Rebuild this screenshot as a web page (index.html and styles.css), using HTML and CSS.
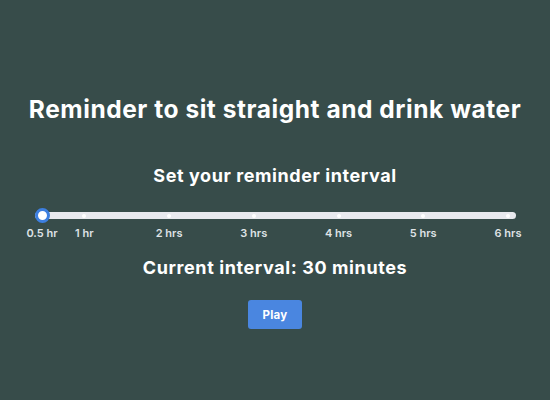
FILE: index.html
```html
<!DOCTYPE html>
<html lang="en">
<head>
<meta charset="utf-8">
<title>Reminder</title>
<link rel="stylesheet" href="styles.css">
</head>
<body>
<main class="app">
  <h1 class="title">Reminder to sit straight and drink water</h1>
  <h2 class="subtitle">Set your reminder interval</h2>
  <div class="slider">
    <div class="track">
      <div class="ticks">
        <span class="tick c1"></span>
        <span class="tick c2"></span>
        <span class="tick c4"></span>
        <span class="tick c6"></span>
        <span class="tick c8"></span>
        <span class="tick c10"></span>
        <span class="tick c12"></span>
      </div>
      <span class="thumb"></span>
    </div>
    <div class="labels">
      <span class="label c1">0.5 hr</span>
      <span class="label c2">1 hr</span>
      <span class="label c4">2 hrs</span>
      <span class="label c6">3 hrs</span>
      <span class="label c8">4 hrs</span>
      <span class="label c10">5 hrs</span>
      <span class="label c12">6 hrs</span>
    </div>
  </div>
  <p class="current">Current interval: 30 minutes</p>
  <button class="play" type="button">Play</button>
</main>
</body>
</html>
```

FILE: styles.css
```css
html, body {
  margin: 0;
  padding: 0;
  height: 100%;
}
body {
  background: #374c4a;
  font-family: Inter, "Noto Sans", "Liberation Sans", sans-serif;
  color: #ffffff;
}
.app {
  display: flex;
  flex-direction: column;
  align-items: center;
  padding-top: 95px;
}
.title {
  margin: 0;
  font-size: 24.5px;
  line-height: 29px;
  font-weight: 700;
  letter-spacing: 0.55px;
  text-align: center;
}
.subtitle {
  margin: 41px 0 0;
  font-size: 18px;
  line-height: 22px;
  font-weight: 700;
  letter-spacing: 0.58px;
}
.slider {
  width: 481px;
  margin-top: 25px;
}
.track {
  position: relative;
  height: 7px;
  border-radius: 4px;
  background: #e8e9ee;
}
.ticks, .labels {
  display: grid;
  grid-template-columns: repeat(12, 1fr);
  margin-left: calc(7.5px - (100% - 15px) / 22);
  margin-right: calc(7.5px - (100% - 15px) / 22);
}
.ticks {
  position: absolute;
  inset: 0;
  align-items: center;
}
.tick {
  justify-self: center;
  width: 4px;
  height: 4px;
  border-radius: 50%;
  background: #ffffff;
}
.thumb {
  position: absolute;
  left: 0;
  top: 50%;
  width: 9px;
  height: 9px;
  margin-top: -7.5px;
  border: 3px solid #3d7fe0;
  border-radius: 50%;
  background: #ffffff;
}
.labels {
  margin-top: 8px;
}
.label {
  justify-self: center;
  white-space: nowrap;
  font-size: 11px;
  line-height: 13px;
  font-weight: 600;
  color: #dfe3e6;
}
.c1 { grid-column: 1; }
.c2 { grid-column: 2; }
.c4 { grid-column: 4; }
.c6 { grid-column: 6; }
.c8 { grid-column: 8; }
.c10 { grid-column: 10; }
.c12 { grid-column: 12; }
.current {
  margin: 17px 0 0;
  font-size: 18px;
  line-height: 22px;
  font-weight: 700;
  letter-spacing: 0.6px;
}
.play {
  margin-top: 21px;
  width: 54px;
  height: 29px;
  border: 0;
  border-radius: 3px;
  background: #4a86e0;
  color: #ffffff;
  font-family: inherit;
  font-size: 11.5px;
  font-weight: 700;
  letter-spacing: 0.2px;
  padding: 0;
}
```
